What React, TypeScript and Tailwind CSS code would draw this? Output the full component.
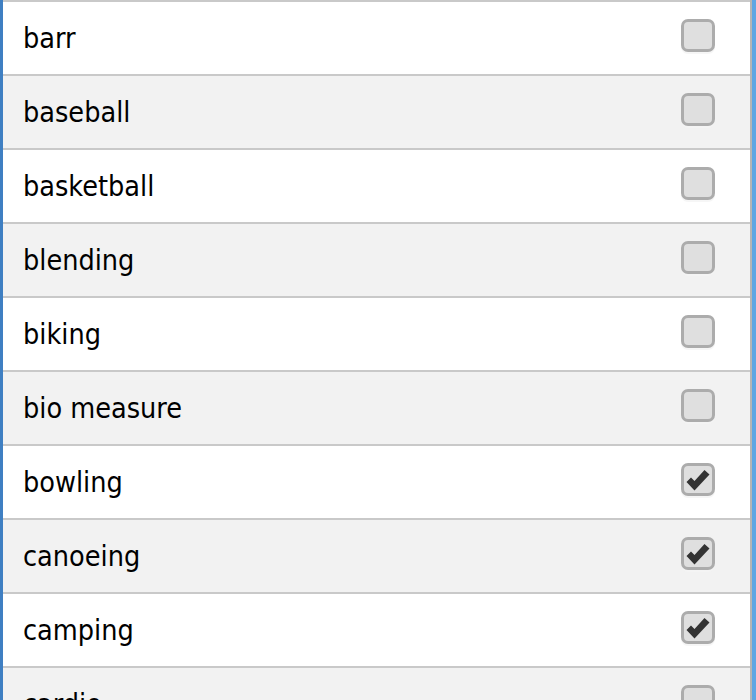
import React from "react";

const items: [string, boolean][] = [
  ["barr", false],
  ["baseball", false],
  ["basketball", false],
  ["blending", false],
  ["biking", false],
  ["bio measure", false],
  ["bowling", true],
  ["canoeing", true],
  ["camping", true],
  ["cardio", false],
];

function Box({ checked }: { checked: boolean }) {
  return (
    <div className="relative w-[34px] h-[35px] -mt-[3px]">
      <div className="absolute left-0 top-[2px] w-[34px] h-[33px] rounded-[7px] bg-[#f4f4f4] opacity-80" />
      <div className="absolute left-0 top-0 w-[34px] h-[33px] rounded-[7px] border-[3px] border-[#acacac] bg-[#dfdfdf] flex items-center justify-center">
        {checked && (
          <svg width="24" height="24" viewBox="0 0 24 24" className="mt-[1px]">
            <path d="M0.5 14 L5 9.5 L8.5 13 L18.5 2 L23.5 6.5 L8.5 22.5 Z" fill="#333" />
          </svg>
        )}
      </div>
    </div>
  );
}

export default function App() {
  return (
    <div className="w-[756px] h-[700px] overflow-hidden bg-white flex">
      <div className="w-[3px] bg-[#3f7fc2]" />
      <div className="flex-1 flex flex-col border-t-2 border-[#c9c9c9]">
        {items.map(([label, checked], i) => (
          <div
            key={label}
            className={`shrink-0 h-[74px] border-b-2 border-[#c9c9c9] flex items-center pl-[20px] pr-[35px] ${i % 2 === 1 ? "bg-[#f2f2f2]" : "bg-white"}`}
          >
            <span
              className="flex-1 text-[28.5px] text-black leading-none pt-[2px]"
              style={{ fontFamily: '"DejaVu Sans Condensed", "DejaVu Sans", sans-serif', fontStretch: "condensed" }}
            >
              {label}
            </span>
            <Box checked={checked} />
          </div>
        ))}
      </div>
      <div className="w-[2px] bg-[#b5b5b5]" />
      <div className="w-[4px] bg-[#5ea6e3]" />
    </div>
  );
}
